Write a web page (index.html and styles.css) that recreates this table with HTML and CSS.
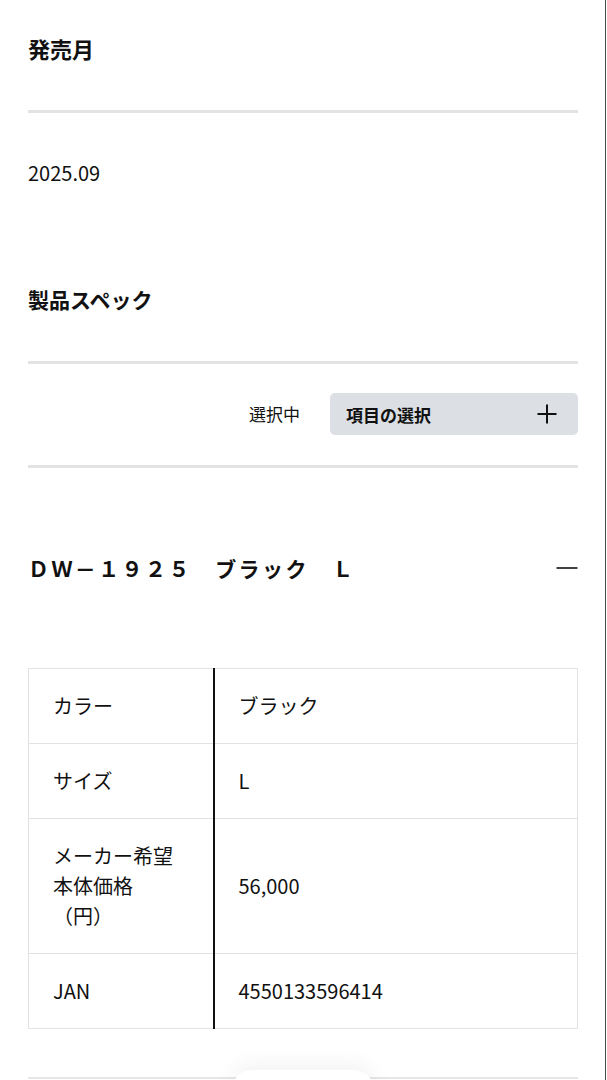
FILE: index.html
```html
<!DOCTYPE html>
<html lang="ja">
<head>
<meta charset="utf-8">
<title>製品スペック</title>
<link rel="stylesheet" href="styles.css">
</head>
<body>
<div class="page">
  <section class="block">
    <h2 class="block-title">発売月</h2>
    <div class="rule"></div>
    <p class="block-value">2025.09</p>
  </section>

  <section class="block spec">
    <h2 class="block-title">製品スペック</h2>
    <div class="rule"></div>
    <div class="select-row">
      <span class="select-label">選択中</span>
      <button class="select-btn" type="button">
        <span>項目の選択</span>
        <svg class="plus" width="22" height="22" viewBox="0 0 22 22" aria-hidden="true">
          <path d="M11 1.5v19M1.5 11h19" stroke="#111" stroke-width="2" fill="none"/>
        </svg>
      </button>
    </div>
    <div class="rule"></div>

    <div class="variant-head">
      <h3 class="variant-title">ＤＷ－１９２５　ブラック　Ｌ</h3>
      <svg class="minus" width="22" height="4" viewBox="0 0 22 4" aria-hidden="true">
        <path d="M0.5 2h21" stroke="#111" stroke-width="1.6" fill="none"/>
      </svg>
    </div>

    <table class="spec-table">
      <colgroup>
        <col class="col-label">
        <col>
      </colgroup>
      <tbody>
        <tr><th>カラー</th><td>ブラック</td></tr>
        <tr><th>サイズ</th><td>L</td></tr>
        <tr><th>メーカー希望本体価格（円）</th><td>56,000</td></tr>
        <tr><th>JAN</th><td>4550133596414</td></tr>
      </tbody>
    </table>
  </section>

  <div class="bottom-rule"></div>
  <div class="float-tab"></div>
</div>
</body>
</html>
```

FILE: styles.css
```css
html, body {
  margin: 0;
  padding: 0;
  background: #fff;
}

body {
  font-family: "Noto Sans CJK JP", "Noto Sans", sans-serif;
  color: #111;
}

.page {
  position: relative;
  width: 606px;
  height: 1080px;
  box-sizing: border-box;
  border-right: 1px solid #4a4a4a;
  padding: 32px 27px 0 28px;
  overflow: hidden;
}

.block-title {
  margin: 0;
  font-size: 22px;
  line-height: 32px;
  font-weight: 700;
}

.spec .block-title {
  font-size: 21px;
}

.rule {
  height: 3px;
  background: #e3e3e3;
  margin-top: 46px;
}

.block-value {
  margin: 45px 0 0 0;
  font-size: 20px;
  line-height: 30px;
  font-weight: 400;
}

.spec {
  margin-top: 95px;
}

.select-row {
  display: flex;
  align-items: center;
  justify-content: flex-end;
  gap: 30px;
  margin-top: 29px;
}

.select-row + .rule {
  margin-top: 30px;
}

.select-label {
  font-size: 17px;
  line-height: 24px;
}

.select-btn {
  width: 248px;
  height: 42px;
  box-sizing: border-box;
  display: flex;
  align-items: center;
  justify-content: space-between;
  padding: 0 20px 0 16px;
  border: none;
  border-radius: 5px;
  background: #dcdfe4;
  font-family: inherit;
  font-size: 17px;
  font-weight: 700;
  color: #111;
}

.plus {
  display: block;
}

.variant-head {
  display: flex;
  align-items: center;
  justify-content: space-between;
  margin-top: 84px;
}

.variant-title {
  margin: 0;
  font-size: 21px;
  line-height: 32px;
  font-weight: 700;
  letter-spacing: 2.4px;
}

.minus {
  display: block;
}

.spec-table {
  margin-top: 84px;
  width: 100%;
  table-layout: fixed;
  border-collapse: collapse;
  border: 1px solid #e2e2e2;
  font-size: 20px;
  line-height: 30px;
}

.col-label {
  width: 185px;
}

.spec-table th,
.spec-table td {
  border-top: 1px solid #e2e2e2;
  padding: 22px 24px;
  text-align: left;
  vertical-align: middle;
  font-weight: 400;
}

.spec-table th {
  padding-right: 34px;
  border-right: 2px solid #111;
}

.bottom-rule {
  position: absolute;
  left: 28px;
  right: 27px;
  top: 1077px;
  height: 2px;
  background: #e6e6e6;
}

.float-tab {
  position: absolute;
  left: 232px;
  width: 142px;
  top: 1070px;
  height: 40px;
  border-radius: 20px;
  background: #fff;
  box-shadow: 0 -6px 22px rgba(0, 0, 0, 0.05);
}
```
